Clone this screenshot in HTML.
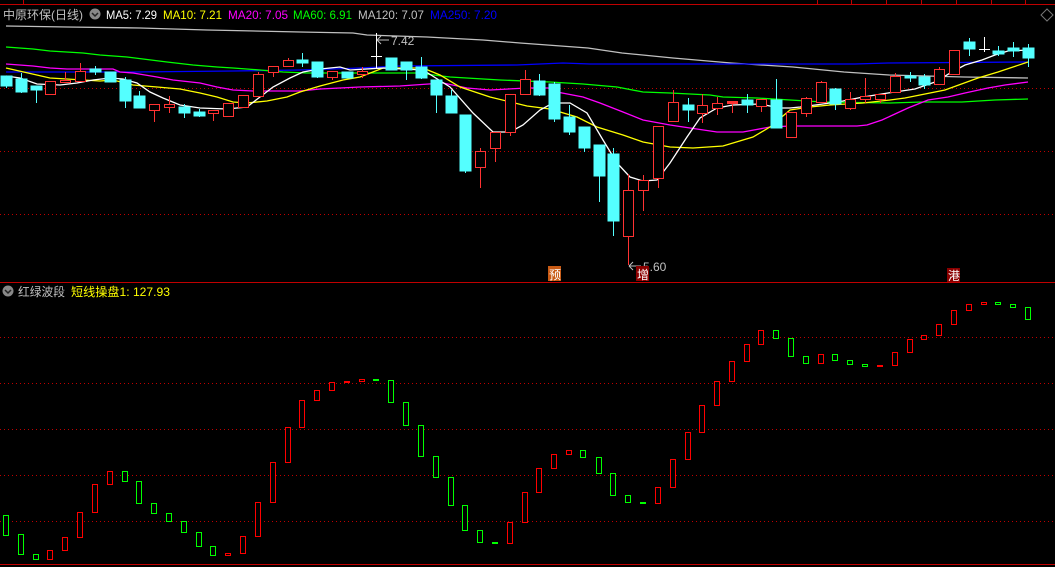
<!DOCTYPE html>
<html><head><meta charset="utf-8"><style>
html,body{margin:0;padding:0;background:#000;width:1055px;height:567px;overflow:hidden}
svg{display:block}
text{font-family:"Liberation Sans","Noto Sans CJK SC",sans-serif}
</style></head><body>
<svg width="1055" height="567" viewBox="0 0 1055 567" xmlns="http://www.w3.org/2000/svg">
<rect width="1055" height="567" fill="#000"/>
<line x1="0" y1="4.5" x2="1055" y2="4.5" stroke="#c00000"/>
<line x1="0" y1="282.5" x2="1055" y2="282.5" stroke="#c00000"/>
<line x1="0" y1="564.5" x2="1055" y2="564.5" stroke="#c00000"/>
<g stroke="#c00000" stroke-dasharray="1,3">
<line x1="0" y1="88.5" x2="1055" y2="88.5"/><line x1="0" y1="151.5" x2="1055" y2="151.5"/><line x1="0" y1="214.5" x2="1055" y2="214.5"/>
<line x1="0" y1="337.5" x2="1055" y2="337.5"/><line x1="0" y1="383.5" x2="1055" y2="383.5"/><line x1="0" y1="429.5" x2="1055" y2="429.5"/><line x1="0" y1="475.5" x2="1055" y2="475.5"/><line x1="0" y1="521.5" x2="1055" y2="521.5"/>
</g>
<g stroke="#c00000"><line x1="23.5" y1="0" x2="23.5" y2="4"/><line x1="817.5" y1="0" x2="817.5" y2="4"/><line x1="851.5" y1="0" x2="851.5" y2="4"/><line x1="886.5" y1="0" x2="886.5" y2="4"/><line x1="921.5" y1="0" x2="921.5" y2="4"/><line x1="956.5" y1="0" x2="956.5" y2="4"/><line x1="991.5" y1="0" x2="991.5" y2="4"/><line x1="1025.5" y1="0" x2="1025.5" y2="4"/></g>
<path d="M1047 9 L1053 15 L1047 21 L1041 15 Z" fill="none" stroke="#777"/>

<g fill="none" stroke-width="1.3">
<polyline stroke="#c0c0c0" points="6,26 67,27 140,28 207,30 300,32 353,33 367,35 427,37 483,40 520,43 588,48 622,53 673,58 731,63 793,67 844,72 889,75 964,77 1028,78"/>
<polyline stroke="#0000ff" points="6,72 133,72 233,71 300,70 333,69 360,68 400,66 517,65 563,63 590,64 855,64 888,63 1028,62"/>
<polyline stroke="#00ff00" points="6,47 33,49 50,51 83,53 100,55 127,57 143,59 167,62 193,65 217,67 233,68 260,70 283,72 307,73 333,73 417,73 450,77 500,80 550,82 583,84 617,87 643,92 670,93 710,95 723,97 757,98 790,100 823,102 890,103 922,102 962,102 995,100 1028,99"/>
<polyline stroke="#ff00ff" points="6,64 33,66 50,68 67,69 100,69 113,69 120,72 133,73 157,77 173,80 200,83 217,87 233,90 253,91 300,91 320,89 360,87 400,86 443,83 467,88 490,90 527,88 550,88 557,92 583,97 600,103 623,112 643,120 670,125 690,128 717,132 743,132 770,127 790,126 823,126 857,126 867,125 882,120 908,108 928,100 948,97 965,93 988,88 1005,85 1028,82"/>
<polyline stroke="#ffff00" points="6,68 50,78 100,81 113,80 133,85 157,87 180,89 200,93 217,97 233,102 247,103 267,101 287,97 300,92 320,86 343,80 360,77 383,68 423,68 440,75 460,87 490,97 527,106 550,109 577,117 597,127 623,135 643,142 670,147 693,148 723,146 753,137 770,127 790,110 810,107 830,105 863,103 890,100 905,98 945,90 978,78 998,72 1028,62"/>
<polyline stroke="#ffffff" points="6,76 20,78 37,84 60,85 77,83 93,80 110,78 123,79 137,83 150,92 163,98 180,105 200,108 227,109 247,107 260,97 273,87 290,78 303,72 320,69 340,67 350,70 383,68 423,70 450,87 473,113 493,132 510,132 523,125 540,110 553,103 570,103 587,113 603,140 617,163 630,177 643,181 657,180 670,163 687,137 700,118 717,108 733,105 760,104 780,108 790,108 800,107 823,104 843,101 863,97 888,93 915,89 935,82 952,72 965,65 982,60 995,55 1008,51 1028,50"/>
</g>

<g stroke="#54ffff" fill="#54ffff">
<line x1="6.5" y1="76" x2="6.5" y2="88"/><rect x="1" y="76" width="11" height="10"/>
<line x1="21.5" y1="73" x2="21.5" y2="93"/><rect x="16" y="79" width="11" height="13"/>
<line x1="36.5" y1="86" x2="36.5" y2="103"/><rect x="31" y="86" width="11" height="4"/>
<line x1="95.5" y1="66" x2="95.5" y2="75"/><rect x="90" y="69" width="11" height="3"/>
<rect x="105" y="72" width="11" height="10"/>
<line x1="125.5" y1="77" x2="125.5" y2="108"/><rect x="120" y="80" width="11" height="21"/>
<line x1="139.5" y1="91" x2="139.5" y2="107"/><rect x="134" y="96" width="11" height="12"/>
<line x1="184.5" y1="104" x2="184.5" y2="118"/><rect x="179" y="107" width="11" height="6"/>
<line x1="199.5" y1="109" x2="199.5" y2="117"/><rect x="194" y="112" width="11" height="4"/>
<line x1="302.5" y1="53" x2="302.5" y2="67"/><rect x="297" y="60" width="11" height="3"/>
<line x1="317.5" y1="62" x2="317.5" y2="78"/><rect x="312" y="62" width="11" height="15"/>
<rect x="342" y="72" width="11" height="6"/>
<rect x="386" y="58" width="11" height="12"/>
<line x1="406.5" y1="62" x2="406.5" y2="80"/><rect x="401" y="62" width="11" height="8"/>
<line x1="421.5" y1="57" x2="421.5" y2="79"/><rect x="416" y="67" width="11" height="11"/>
<line x1="436.5" y1="80" x2="436.5" y2="113"/><rect x="431" y="80" width="11" height="15"/>
<line x1="451.5" y1="90" x2="451.5" y2="113"/><rect x="446" y="96" width="11" height="17"/>
<line x1="465.5" y1="115" x2="465.5" y2="173"/><rect x="460" y="115" width="11" height="56"/>
<line x1="539.5" y1="74" x2="539.5" y2="96"/><rect x="534" y="81" width="11" height="14"/>
<line x1="554.5" y1="82" x2="554.5" y2="122"/><rect x="549" y="84" width="11" height="35"/>
<line x1="569.5" y1="105" x2="569.5" y2="135"/><rect x="564" y="117" width="11" height="15"/>
<line x1="584.5" y1="127" x2="584.5" y2="152"/><rect x="579" y="127" width="11" height="21"/>
<line x1="599.5" y1="145" x2="599.5" y2="202"/><rect x="594" y="145" width="11" height="31"/>
<line x1="613.5" y1="148" x2="613.5" y2="236"/><rect x="608" y="154" width="11" height="67"/>
<line x1="688.5" y1="98" x2="688.5" y2="122"/><rect x="683" y="105" width="11" height="5"/>
<line x1="747.5" y1="94" x2="747.5" y2="113"/><rect x="742" y="100" width="11" height="5"/>
<line x1="776.5" y1="79" x2="776.5" y2="127"/><rect x="771" y="100" width="11" height="28"/>
<line x1="835.5" y1="88" x2="835.5" y2="110"/><rect x="830" y="89" width="11" height="15"/>
<line x1="910.5" y1="72" x2="910.5" y2="82"/><rect x="905" y="76" width="11" height="2"/>
<line x1="924.5" y1="74" x2="924.5" y2="89"/><rect x="919" y="77" width="11" height="8"/>
<line x1="969.5" y1="38" x2="969.5" y2="56"/><rect x="964" y="42" width="11" height="7"/>
<line x1="998.5" y1="46" x2="998.5" y2="56"/><rect x="993" y="51" width="11" height="3"/>
<line x1="1013.5" y1="42" x2="1013.5" y2="57"/><rect x="1008" y="48" width="11" height="3"/>
<line x1="1028.5" y1="44" x2="1028.5" y2="67"/><rect x="1023" y="48" width="11" height="10"/>
</g>
<g stroke="#fff"><line x1="376.5" y1="33" x2="376.5" y2="68"/><line x1="371" y1="56.5" x2="382" y2="56.5"/>
<line x1="984.5" y1="37" x2="984.5" y2="52"/><line x1="979" y1="49.5" x2="990" y2="49.5"/></g>
<g stroke="#ff3232" fill="#000">
<rect x="45.5" y="81.5" width="10" height="13"/>
<line x1="65.5" y1="72" x2="65.5" y2="80"/><rect x="60.5" y="80.5" width="10" height="2"/>
<line x1="80.5" y1="63" x2="80.5" y2="71"/><rect x="75.5" y="71.5" width="10" height="10"/>
<line x1="154.5" y1="110" x2="154.5" y2="122"/><rect x="149.5" y="104.5" width="10" height="6"/>
<line x1="169.5" y1="96" x2="169.5" y2="113"/><rect x="164.5" y="104.5" width="10" height="3"/>
<line x1="213.5" y1="113" x2="213.5" y2="121"/><rect x="208.5" y="110.5" width="10" height="3"/>
<line x1="228.5" y1="116" x2="228.5" y2="117"/><rect x="223.5" y="103.5" width="10" height="13"/>
<rect x="238.5" y="95.5" width="10" height="12"/>
<line x1="258.5" y1="72" x2="258.5" y2="74"/><rect x="253.5" y="74.5" width="10" height="22"/>
<line x1="273.5" y1="72" x2="273.5" y2="77"/><rect x="268.5" y="66.5" width="10" height="6"/>
<line x1="288.5" y1="58" x2="288.5" y2="60"/><rect x="283.5" y="60.5" width="10" height="6"/>
<line x1="332.5" y1="77" x2="332.5" y2="80"/><rect x="327.5" y="71.5" width="10" height="6"/>
<line x1="362.5" y1="67" x2="362.5" y2="78"/><rect x="357.5" y="71.5" width="10" height="3"/>
<line x1="480.5" y1="148" x2="480.5" y2="188"/><rect x="475.5" y="151.5" width="10" height="16"/>
<line x1="495.5" y1="148" x2="495.5" y2="162"/><rect x="490.5" y="132.5" width="10" height="16"/>
<line x1="510.5" y1="132" x2="510.5" y2="136"/><rect x="505.5" y="94.5" width="10" height="38"/>
<line x1="525.5" y1="70" x2="525.5" y2="79"/><rect x="520.5" y="79.5" width="10" height="15"/>
<line x1="628.5" y1="174" x2="628.5" y2="265"/><rect x="623.5" y="190.5" width="10" height="46"/>
<line x1="643.5" y1="175" x2="643.5" y2="211"/><rect x="638.5" y="180.5" width="10" height="10"/>
<line x1="658.5" y1="178" x2="658.5" y2="188"/><rect x="653.5" y="126.5" width="10" height="52"/>
<line x1="673.5" y1="90" x2="673.5" y2="102"/><rect x="668.5" y="102.5" width="10" height="19"/>
<line x1="702.5" y1="94" x2="702.5" y2="123"/><rect x="697.5" y="105.5" width="10" height="8"/>
<line x1="717.5" y1="97" x2="717.5" y2="115"/><rect x="712.5" y="103.5" width="10" height="5"/>
<line x1="732.5" y1="102" x2="732.5" y2="113"/><rect x="727.5" y="101.5" width="10" height="2" fill="#ff3232"/>
<line x1="761.5" y1="106" x2="761.5" y2="112"/><rect x="756.5" y="99.5" width="10" height="7"/>
<rect x="786.5" y="112.5" width="10" height="25"/>
<line x1="806.5" y1="97" x2="806.5" y2="117"/><rect x="801.5" y="98.5" width="10" height="15"/>
<line x1="821.5" y1="81" x2="821.5" y2="82"/><rect x="816.5" y="82.5" width="10" height="20"/>
<line x1="850.5" y1="92" x2="850.5" y2="110"/><rect x="845.5" y="99.5" width="10" height="9"/>
<line x1="865.5" y1="78" x2="865.5" y2="103"/><rect x="860.5" y="96.5" width="10" height="3"/>
<line x1="880.5" y1="99" x2="880.5" y2="103"/><rect x="875.5" y="94.5" width="10" height="5"/>
<line x1="895.5" y1="73" x2="895.5" y2="76"/><rect x="890.5" y="76.5" width="10" height="16"/>
<line x1="939.5" y1="67" x2="939.5" y2="69"/><rect x="934.5" y="69.5" width="10" height="15"/>
<rect x="949.5" y="50.5" width="10" height="24"/>
</g>
<g stroke="#c0c0c0" fill="none"><path d="M377 40 L389 40 M377 40 L381 36 M377 40 L381 44"/><path d="M629 266 L641 266 M629 266 L633 262 M629 266 L633 270"/></g>
<text x="391" y="45" font-size="12" fill="#c0c0c0">7.42</text>
<text x="643" y="271" font-size="12" fill="#c0c0c0">5.60</text>
<rect x="548" y="266" width="13" height="15" fill="#c85a14"/><text x="549" y="279" font-size="12" fill="#fff">预</text>
<rect x="636" y="266" width="13" height="15" fill="#8b0000"/><text x="637" y="279" font-size="12" fill="#fff">增</text>
<rect x="947" y="268" width="13" height="14" fill="#8b0000"/><text x="948" y="280" font-size="12" fill="#fff">港</text>

<text x="3" y="19" font-size="12" fill="#c0c0c0" textLength="80" lengthAdjust="spacingAndGlyphs">中原环保(日线)</text>
<circle cx="95" cy="14" r="5.5" fill="#888"/><path d="M92 13 L95 16 L98 13" stroke="#222" stroke-width="1.5" fill="none"/>
<text x="106" y="19" font-size="12" fill="#fff" textLength="51" lengthAdjust="spacingAndGlyphs">MA5: 7.29</text>
<text x="163" y="19" font-size="12" fill="#ffff00" textLength="59" lengthAdjust="spacingAndGlyphs">MA10: 7.21</text>
<text x="228" y="19" font-size="12" fill="#ff00ff" textLength="60" lengthAdjust="spacingAndGlyphs">MA20: 7.05</text>
<text x="293" y="19" font-size="12" fill="#00ff00" textLength="59" lengthAdjust="spacingAndGlyphs">MA60: 6.91</text>
<text x="358" y="19" font-size="12" fill="#c0c0c0" textLength="66" lengthAdjust="spacingAndGlyphs">MA120: 7.07</text>
<text x="430" y="19" font-size="12" fill="#0000ff" textLength="67" lengthAdjust="spacingAndGlyphs">MA250: 7.20</text>

<circle cx="8" cy="291" r="5.5" fill="#888"/><path d="M5 290 L8 293 L11 290" stroke="#222" stroke-width="1.5" fill="none"/>
<text x="18" y="296" font-size="12" fill="#c0c0c0" textLength="47" lengthAdjust="spacingAndGlyphs">红绿波段</text>
<text x="71" y="296" font-size="12" fill="#ffff00" textLength="99" lengthAdjust="spacingAndGlyphs">短线操盘1: 127.93</text>

<g stroke="#00ff00" fill="#000">
<rect x="3.5" y="515.5" width="5" height="20"/><rect x="18.5" y="534.5" width="5" height="20"/><rect x="33.5" y="554.5" width="5" height="5"/>
<rect x="122.5" y="471.5" width="5" height="10"/><rect x="136.5" y="481.5" width="5" height="22"/><rect x="151.5" y="503.5" width="5" height="10"/><rect x="166.5" y="513.5" width="5" height="8"/><rect x="181.5" y="521.5" width="5" height="11"/><rect x="196.5" y="532.5" width="5" height="14"/><rect x="210.5" y="546.5" width="5" height="9"/>
<rect x="373.5" y="379.5" width="5" height="1" fill="#00ff00"/>
<rect x="388.5" y="380.5" width="5" height="22"/><rect x="403.5" y="402.5" width="5" height="23"/><rect x="418.5" y="425.5" width="5" height="31"/><rect x="433.5" y="456.5" width="5" height="21"/><rect x="448.5" y="477.5" width="5" height="28"/><rect x="462.5" y="505.5" width="5" height="25"/><rect x="477.5" y="530.5" width="5" height="12"/>
<rect x="492.5" y="542.5" width="5" height="1" fill="#00ff00"/>
<rect x="580.5" y="450.5" width="5" height="7"/><rect x="596.5" y="457.5" width="5" height="16"/><rect x="610.5" y="473.5" width="5" height="22"/><rect x="625.5" y="495.5" width="5" height="7"/>
<rect x="640.5" y="502.5" width="5" height="1" fill="#00ff00"/>
<rect x="773.5" y="330.5" width="5" height="8"/><rect x="788.5" y="338.5" width="5" height="18"/><rect x="803.5" y="356.5" width="5" height="7"/><rect x="832.5" y="354.5" width="5" height="6"/><rect x="847.5" y="360.5" width="5" height="4"/><rect x="862.5" y="364.5" width="5" height="2"/>
<rect x="995.5" y="302.5" width="5" height="2"/><rect x="1010.5" y="304.5" width="5" height="3"/><rect x="1025.5" y="307.5" width="5" height="12"/>
</g>
<g stroke="#ff0000" fill="#000">
<rect x="47.5" y="550.5" width="5" height="9"/><rect x="62.5" y="537.5" width="5" height="13"/><rect x="77.5" y="512.5" width="5" height="25"/><rect x="92.5" y="484.5" width="5" height="28"/><rect x="107.5" y="471.5" width="5" height="13"/>
<rect x="225.5" y="553.5" width="5" height="2"/><rect x="240.5" y="536.5" width="5" height="17"/><rect x="255.5" y="502.5" width="5" height="34"/><rect x="270.5" y="462.5" width="5" height="40"/><rect x="285.5" y="427.5" width="5" height="35"/><rect x="299.5" y="400.5" width="5" height="27"/><rect x="314.5" y="390.5" width="5" height="10"/><rect x="329.5" y="382.5" width="5" height="8"/>
<rect x="344.5" y="381.5" width="5" height="1" fill="#ff0000"/><rect x="359.5" y="379.5" width="5" height="2"/>
<rect x="507.5" y="522.5" width="5" height="21"/><rect x="522.5" y="492.5" width="5" height="30"/><rect x="536.5" y="468.5" width="5" height="24"/><rect x="551.5" y="454.5" width="5" height="14"/><rect x="566.5" y="450.5" width="5" height="4"/>
<rect x="655.5" y="487.5" width="5" height="16"/><rect x="670.5" y="459.5" width="5" height="28"/><rect x="685.5" y="432.5" width="5" height="27"/><rect x="699.5" y="405.5" width="5" height="27"/><rect x="714.5" y="381.5" width="5" height="24"/><rect x="729.5" y="361.5" width="5" height="20"/><rect x="744.5" y="344.5" width="5" height="17"/><rect x="758.5" y="330.5" width="5" height="14"/>
<rect x="818.5" y="354.5" width="5" height="9"/>
<rect x="877.5" y="365.5" width="5" height="1" fill="#ff0000"/>
<rect x="892.5" y="352.5" width="5" height="13"/><rect x="907.5" y="339.5" width="5" height="13"/><rect x="921.5" y="335.5" width="5" height="4"/><rect x="936.5" y="324.5" width="5" height="11"/><rect x="951.5" y="310.5" width="5" height="14"/><rect x="966.5" y="304.5" width="5" height="6"/><rect x="981.5" y="302.5" width="5" height="2"/>
</g>
</svg>
</body></html>
